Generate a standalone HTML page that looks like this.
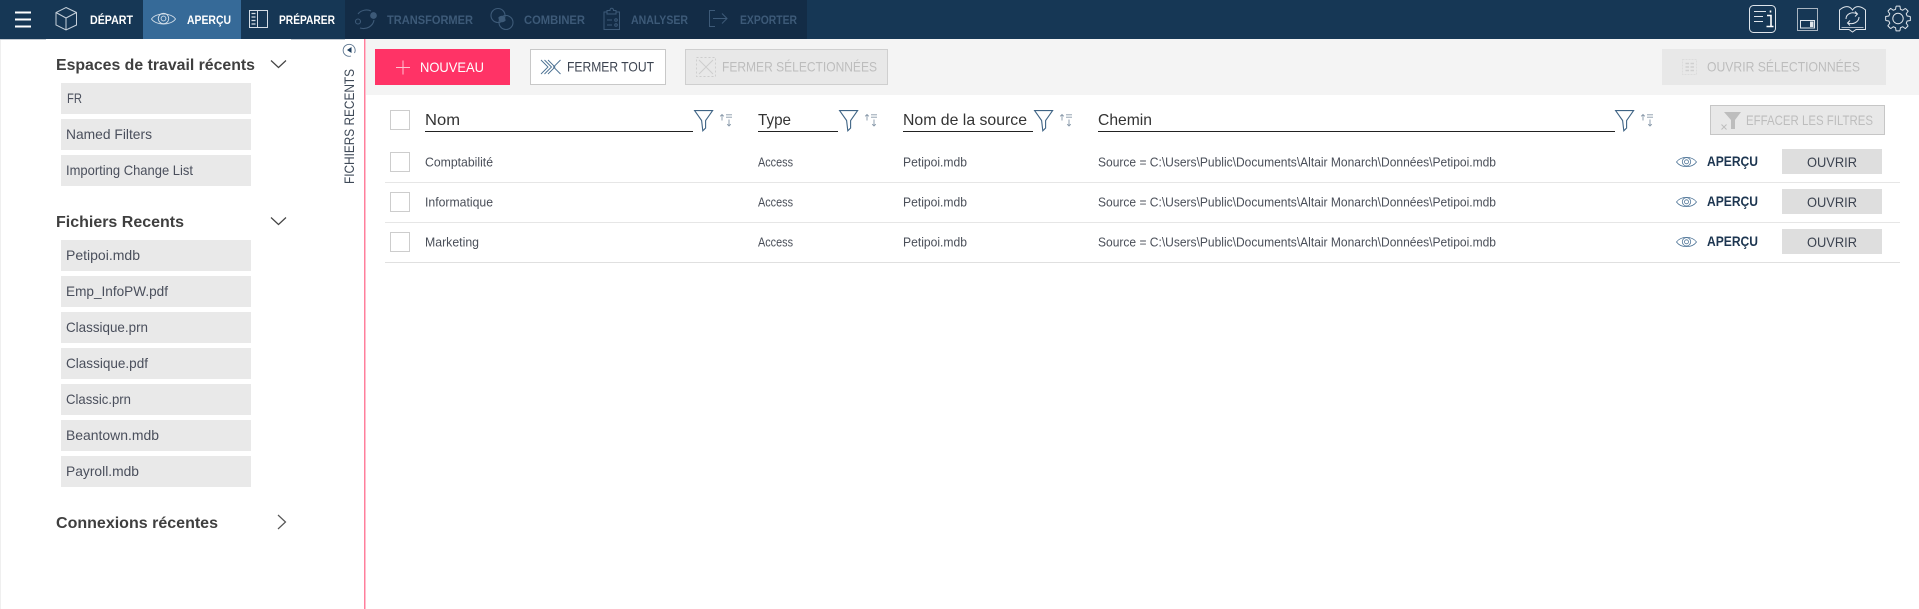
<!DOCTYPE html>
<html lang="fr">
<head>
<meta charset="utf-8">
<title>Monarch</title>
<style>
html,body{margin:0;padding:0;background:#fff;width:1919px;height:609px;overflow:hidden}
svg{display:block}
text{font-family:"Liberation Sans",sans-serif}
.nav{font-size:12px;font-weight:bold;fill:#fff}
.dis{font-size:12px;font-weight:bold;fill:#3d5a78}
.hd{font-size:16px;font-weight:bold;fill:#3f3f3f}
.it{font-size:14px;fill:#4a4f5c}
.th{font-size:16px;fill:#333}
.td{font-size:12.5px;fill:#4a4f59}
.btn{font-size:14px;fill:#3c4350}
.off{font-size:14px;fill:#bdbdbd}
</style>
</head>
<body>
<svg width="1919" height="609" viewBox="0 0 1919 609" xmlns="http://www.w3.org/2000/svg">
<defs>
<g id="filt" fill="none" stroke="#3f6485" stroke-width="1.100"><path d="M.6 .6H18.6L11.6 10.500V18L8.800 20.800 7.600 10.500Z"/></g>
<g id="sort" fill="none" stroke="#8697a8" stroke-width=".9"><path d="M2 6.500V.5M.2 2.300 2 .5 3.800 2.300M9 5.500V12M7.200 10.200 9 12 10.800 10.200M6 .8H12M6 3.200H12"/></g>
<g id="eye" fill="none" stroke="#4f7598" stroke-width=".8"><path d="M.5 7C5 .8 16 .8 20.500 7 16 13.200 5 13.200 .5 7Z"/><circle cx="10.500" cy="6.800" r="4.200"/><circle cx="10.500" cy="6.800" r="2"/></g>
<path id="tooth" d="M12.350 -1.960L12.350 1.960 9.180 2.460 8.230 4.750 10.110 7.350" fill="none" stroke="#dfe5eb" stroke-width="1" stroke-linejoin="round"/>
</defs>

<!-- nav bar -->
<rect x="0" y="0" width="1919" height="39" fill="#163755"/>
<rect x="345" y="0" width="462" height="39" fill="#132c46"/>
<rect x="143" y="0" width="98" height="39" fill="#366a98"/>
<rect x="0" y="39" width="46" height="1" fill="#c5ccd3"/>
<rect x="291" y="39" width="54" height="1" fill="#c5ccd3"/>

<path d="M15 12.500H31M15 19.500H31M15 26.500H31" stroke="#fff" stroke-width="2"/>
<g fill="none" stroke="#c6d0da" stroke-width="1">
<path d="M66 7.500 76.500 12.500V25L66 30 56 25V12.500ZM56 12.500 66 18 76.500 12.500M66 18V30"/>
</g>
<text class="nav" x="90" y="24" textLength="43" lengthAdjust="spacingAndGlyphs">DÉPART</text>
<g transform="translate(151,12)" fill="none" stroke="#d5e0ea" stroke-width=".9"><path d="M.5 7C5 .3 20 .3 24.500 7 20 13.700 5 13.700 .5 7Z"/><circle cx="12.500" cy="6.500" r="5.200"/><circle cx="12.500" cy="6.500" r="2.400"/></g>
<text class="nav" x="187" y="24" textLength="44" lengthAdjust="spacingAndGlyphs">APERÇU</text>
<g fill="none" stroke="#d5dde5" stroke-width="1"><rect x="249.500" y="10.500" width="18" height="17"/><path d="M257.500 10.500V27.500"/><path d="M251.500 13.500H255.500M251.500 17H255.500M251.500 20.500H255.500M251.500 24H255.500" stroke-width="1.200"/></g>
<text class="nav" x="279" y="24" textLength="56" lengthAdjust="spacingAndGlyphs">PRÉPARER</text>

<g fill="none" stroke="#3d5a78" stroke-width="1.100"><path d="M358 14C361 10 367 9 371 11M374 20C373 26 367 30 360 28"/><circle cx="358" cy="21.500" r="2.500"/><circle cx="373.500" cy="15.500" r="2.800" fill="#3d5a78"/></g>
<text class="dis" x="387" y="24" textLength="86" lengthAdjust="spacingAndGlyphs">TRANSFORMER</text>
<g fill="none" stroke="#3d5a78" stroke-width="1.100"><circle cx="498" cy="15.500" r="7"/><circle cx="506" cy="22.500" r="7"/><path d="M499 17.500C502 15 505 17 505 20.500 502 23 499 21 499 17.500Z" fill="#3d5a78"/></g>
<text class="dis" x="524" y="24" textLength="61" lengthAdjust="spacingAndGlyphs">COMBINER</text>
<g fill="none" stroke="#3d5a78" stroke-width="1"><path d="M607 12H604V29.500H619.500V12H616M607 14V10.500H610C610 7.500 613.500 7.500 613.500 10.500H616V14Z"/><path d="M607 20H612M607 25H612"/><circle cx="616" cy="20" r="1.300"/><circle cx="616" cy="25" r="1.300"/></g>
<text class="dis" x="631" y="24" textLength="57" lengthAdjust="spacingAndGlyphs">ANALYSER</text>
<g fill="none" stroke="#3d5a78" stroke-width="1"><path d="M715 10.500H709.500V26.500H715M713 18.500H727M722 13.500 727 18.500 722 23.500"/></g>
<text class="dis" x="740" y="24" textLength="57" lengthAdjust="spacingAndGlyphs">EXPORTER</text>

<!-- top right icons -->
<g fill="none" stroke="#dfe5eb" stroke-width="1">
<rect x="1749.500" y="5.500" width="26" height="27" rx="4"/>
<path d="M1754 11.500H1766M1754 16.500H1763M1754 21.500H1763"/>
<path d="M1767 15.500H1771V26M1766.500 26.500H1773.500M1770.500 10.500V12.500" stroke-width="1.600" stroke="#fff"/>
<rect x="1797.500" y="8.500" width="20" height="22" stroke="#a9b5c1"/>
<rect x="1800.500" y="20.500" width="14" height="7.500" stroke="#dfe5eb"/>
<rect x="1810" y="21.500" width="3.500" height="5.500" fill="#dfe5eb" stroke="none"/>
<path d="M1839.500 10C1845 5 1850 6 1852.500 10 1855 6 1860 5 1865.500 10V29.500H1856L1852.500 32 1849 29.500H1839.500Z"/>
<path d="M1841.500 27.500H1863.500" stroke-width=".8"/>
<path d="M1846 19C1846 14 1852 11 1857 14M1859 17C1859 22 1853 25 1848 23M1855 11.500 1857.500 14 1855 16.500M1850 20.500 1847.500 23 1850 25.500"/>
</g>
<g transform="translate(1898,18.500)">
<use href="#tooth"/>
<use href="#tooth" transform="rotate(45)"/>
<use href="#tooth" transform="rotate(90)"/>
<use href="#tooth" transform="rotate(135)"/>
<use href="#tooth" transform="rotate(180)"/>
<use href="#tooth" transform="rotate(225)"/>
<use href="#tooth" transform="rotate(270)"/>
<use href="#tooth" transform="rotate(315)"/>
<circle r="5.200" fill="none" stroke="#dfe5eb"/>
</g>

<!-- sidebar -->
<rect x="0" y="40" width="1" height="569" fill="#efefef"/>
<text class="hd" x="56" y="70" textLength="199" lengthAdjust="spacingAndGlyphs">Espaces de travail récents</text>
<path d="M271 60.500 278.500 67.500 286 60.500" fill="none" stroke="#444" stroke-width="1.200"/>
<g fill="#e9e9e9">
<rect x="61" y="83" width="190" height="31"/><rect x="61" y="119" width="190" height="31"/><rect x="61" y="155" width="190" height="31"/>
<rect x="61" y="240" width="190" height="31"/><rect x="61" y="276" width="190" height="31"/><rect x="61" y="312" width="190" height="31"/><rect x="61" y="348" width="190" height="31"/><rect x="61" y="384" width="190" height="31"/><rect x="61" y="420" width="190" height="31"/><rect x="61" y="456" width="190" height="31"/>
</g>
<text class="it" x="67" y="103" textLength="15" lengthAdjust="spacingAndGlyphs">FR</text>
<text class="it" x="66" y="139" textLength="86" lengthAdjust="spacingAndGlyphs">Named Filters</text>
<text class="it" x="66" y="175" textLength="127" lengthAdjust="spacingAndGlyphs">Importing Change List</text>
<text class="hd" x="56" y="227" textLength="128" lengthAdjust="spacingAndGlyphs">Fichiers Recents</text>
<path d="M271 217.500 278.500 224.500 286 217.500" fill="none" stroke="#444" stroke-width="1.200"/>
<text class="it" x="66" y="260" textLength="74" lengthAdjust="spacingAndGlyphs">Petipoi.mdb</text>
<text class="it" x="66" y="296" textLength="102" lengthAdjust="spacingAndGlyphs">Emp_InfoPW.pdf</text>
<text class="it" x="66" y="332" textLength="82" lengthAdjust="spacingAndGlyphs">Classique.prn</text>
<text class="it" x="66" y="368" textLength="82" lengthAdjust="spacingAndGlyphs">Classique.pdf</text>
<text class="it" x="66" y="404" textLength="65" lengthAdjust="spacingAndGlyphs">Classic.prn</text>
<text class="it" x="66" y="440" textLength="93" lengthAdjust="spacingAndGlyphs">Beantown.mdb</text>
<text class="it" x="66" y="476" textLength="73" lengthAdjust="spacingAndGlyphs">Payroll.mdb</text>
<text class="hd" x="56" y="528" textLength="162" lengthAdjust="spacingAndGlyphs">Connexions récentes</text>
<path d="M278 515 285.500 522 278 529" fill="none" stroke="#555" stroke-width="1.200"/>

<!-- vertical strip -->
<g fill="none" stroke="#5d7690" stroke-width=".9"><path d="M354.500 53A6 6 0 1 0 351 56"/></g>
<path d="M347 50 351.500 47V53Z" fill="#1f3f5f"/>
<text x="354" y="184" transform="rotate(-90 354 184)" font-size="14" fill="#3f4a58" textLength="115" lengthAdjust="spacingAndGlyphs">FICHIERS RECENTS</text>
<rect x="364" y="39" width="1.500" height="570" fill="#ff7f9c"/>

<!-- toolbar -->
<rect x="366" y="39" width="1553" height="56" fill="#f4f4f4"/>
<rect x="375" y="49" width="135" height="36" fill="#ff3366"/>
<path d="M396 67.500H410M403 60.500V74.500" stroke="#ffc2d1" stroke-width="1"/>
<text x="420" y="72" font-size="14" fill="#fff" textLength="64" lengthAdjust="spacingAndGlyphs">NOUVEAU</text>

<rect x="530.500" y="49.500" width="135" height="35" fill="#fff" stroke="#c8c8c8"/>
<g fill="none" stroke="#4a7091" stroke-width=".9"><path d="M541 60 548 67 541 74M544.500 60 551.500 67 544.500 74M548 60 555 67 548 74"/><path d="M560.500 60 553.500 67 560.500 74"/></g>
<text class="btn" x="567" y="71.500" textLength="87" lengthAdjust="spacingAndGlyphs">FERMER TOUT</text>

<rect x="685.500" y="49.500" width="202" height="35" fill="#e8e8e8" stroke="#cfcfcf"/>
<g fill="none" stroke="#cdcdcd" stroke-width=".9"><rect x="696.500" y="57.500" width="19" height="19" stroke-dasharray="2 2"/><path d="M699 60 713 74M713 60 699 74"/></g>
<text class="off" x="722" y="71.500" textLength="155" lengthAdjust="spacingAndGlyphs">FERMER SÉLECTIONNÉES</text>

<rect x="1662" y="49" width="224" height="36" fill="#e8e8e8"/>
<g fill="none" stroke="#dcdcdc" stroke-width="1"><rect x="1682.500" y="59.500" width="14" height="15" stroke-dasharray="2 1"/><path d="M1685.500 63.500H1689M1690.500 63.500H1694M1685.500 67H1689M1690.500 67H1694M1685.500 70.500H1689M1690.500 70.500H1694" stroke="#d0d0d0" stroke-width="1.500"/></g>
<text class="off" x="1707" y="71.500" textLength="153" lengthAdjust="spacingAndGlyphs">OUVRIR SÉLECTIONNÉES</text>

<!-- table header -->
<rect x="390.500" y="110.500" width="19" height="19" fill="#fff" stroke="#cdcdcd"/>
<text class="th" x="425" y="125" textLength="35" lengthAdjust="spacingAndGlyphs">Nom</text>
<rect x="425" y="131" width="268" height="1" fill="#222"/>
<use href="#filt" x="694" y="110"/><use href="#sort" x="720" y="114"/>
<text class="th" x="758" y="125" textLength="33" lengthAdjust="spacingAndGlyphs">Type</text>
<rect x="758" y="131" width="80" height="1" fill="#222"/>
<use href="#filt" x="839" y="110"/><use href="#sort" x="865" y="114"/>
<text class="th" x="903" y="125" textLength="124" lengthAdjust="spacingAndGlyphs">Nom de la source</text>
<rect x="903" y="131" width="130" height="1" fill="#222"/>
<use href="#filt" x="1034" y="110"/><use href="#sort" x="1060" y="114"/>
<text class="th" x="1098" y="125" textLength="54" lengthAdjust="spacingAndGlyphs">Chemin</text>
<rect x="1098" y="131" width="517" height="1" fill="#222"/>
<use href="#filt" x="1615" y="110"/><use href="#sort" x="1641" y="114"/>

<rect x="1710.500" y="105.500" width="174" height="29" fill="#e8e8e8" stroke="#c6c6c6"/>
<path d="M1724 112H1741L1735 120V129H1731V120Z" fill="#bdbdbd"/>
<path d="M1721.500 124.500 1726.500 129.500M1726.500 124.500 1721.500 129.500" stroke="#bdbdbd"/>
<text class="off" x="1746" y="125" textLength="127" lengthAdjust="spacingAndGlyphs">EFFACER LES FILTRES</text>

<!-- rows -->
<rect x="390.500" y="152.500" width="19" height="19" fill="#fff" stroke="#cdcdcd"/>
<text class="td" x="425" y="166.500" textLength="68" lengthAdjust="spacingAndGlyphs">Comptabilité</text>
<text class="td" x="758" y="166.500" textLength="35" lengthAdjust="spacingAndGlyphs">Access</text>
<text class="td" x="903" y="166.500" textLength="64" lengthAdjust="spacingAndGlyphs">Petipoi.mdb</text>
<text class="td" x="1098" y="166.500" textLength="398" lengthAdjust="spacingAndGlyphs">Source = C:\Users\Public\Documents\Altair Monarch\Données\Petipoi.mdb</text>
<use href="#eye" x="1676" y="155"/>
<text x="1707" y="166" font-size="14" font-weight="bold" fill="#1c3550" textLength="51" lengthAdjust="spacingAndGlyphs">APERÇU</text>
<rect x="1782" y="149" width="100" height="25" fill="#dedede"/>
<text class="btn" x="1807" y="167" textLength="50" lengthAdjust="spacingAndGlyphs">OUVRIR</text>
<rect x="385" y="182" width="1515" height="1" fill="#e6e6e6"/>

<rect x="390.500" y="192.500" width="19" height="19" fill="#fff" stroke="#cdcdcd"/>
<text class="td" x="425" y="206.500" textLength="68" lengthAdjust="spacingAndGlyphs">Informatique</text>
<text class="td" x="758" y="206.500" textLength="35" lengthAdjust="spacingAndGlyphs">Access</text>
<text class="td" x="903" y="206.500" textLength="64" lengthAdjust="spacingAndGlyphs">Petipoi.mdb</text>
<text class="td" x="1098" y="206.500" textLength="398" lengthAdjust="spacingAndGlyphs">Source = C:\Users\Public\Documents\Altair Monarch\Données\Petipoi.mdb</text>
<use href="#eye" x="1676" y="195"/>
<text x="1707" y="206" font-size="14" font-weight="bold" fill="#1c3550" textLength="51" lengthAdjust="spacingAndGlyphs">APERÇU</text>
<rect x="1782" y="189" width="100" height="25" fill="#dedede"/>
<text class="btn" x="1807" y="207" textLength="50" lengthAdjust="spacingAndGlyphs">OUVRIR</text>
<rect x="385" y="222" width="1515" height="1" fill="#e6e6e6"/>

<rect x="390.500" y="232.500" width="19" height="19" fill="#fff" stroke="#cdcdcd"/>
<text class="td" x="425" y="246.500" textLength="54" lengthAdjust="spacingAndGlyphs">Marketing</text>
<text class="td" x="758" y="246.500" textLength="35" lengthAdjust="spacingAndGlyphs">Access</text>
<text class="td" x="903" y="246.500" textLength="64" lengthAdjust="spacingAndGlyphs">Petipoi.mdb</text>
<text class="td" x="1098" y="246.500" textLength="398" lengthAdjust="spacingAndGlyphs">Source = C:\Users\Public\Documents\Altair Monarch\Données\Petipoi.mdb</text>
<use href="#eye" x="1676" y="235"/>
<text x="1707" y="246" font-size="14" font-weight="bold" fill="#1c3550" textLength="51" lengthAdjust="spacingAndGlyphs">APERÇU</text>
<rect x="1782" y="229" width="100" height="25" fill="#dedede"/>
<text class="btn" x="1807" y="247" textLength="50" lengthAdjust="spacingAndGlyphs">OUVRIR</text>
<rect x="385" y="262" width="1515" height="1" fill="#e0e0e0"/>
</svg>
</body>
</html>
